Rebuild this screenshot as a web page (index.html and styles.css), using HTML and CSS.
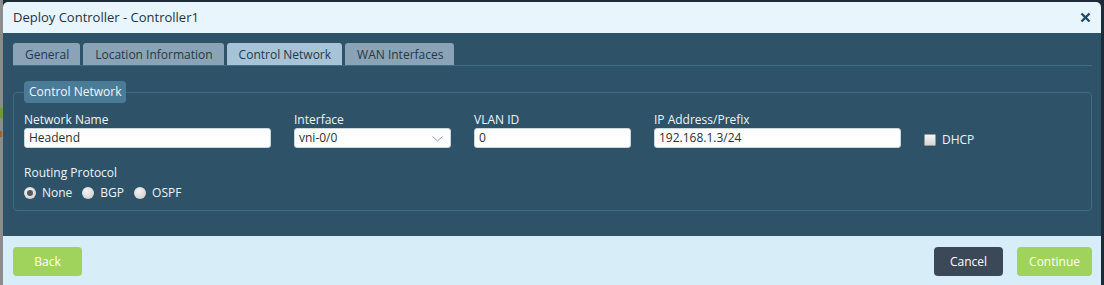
FILE: index.html
```html
<html>
<head>
  <meta charset="utf-8" />
  <title>Deploy Controller</title>
  <link rel="stylesheet" href="styles.css">
</head>
<body>

<div class="page">
  <div class="behind">
    <div class="behind-green"></div>
    <div class="behind-mark"></div>
  </div>

  <div class="dialog">
    <div class="dialog-head">
      <span class="dialog-title">Deploy Controller - Controller1</span>
      <svg class="close" width="11" height="11" viewBox="0 0 11 11">
        <path d="M1.5 1.5 L9.5 9.5 M9.5 1.5 L1.5 9.5" stroke="#1f4a68" stroke-width="2.4" />
      </svg>
    </div>

    <div class="dialog-body">
      <div class="tabs">
        <div class="tab">General</div>
        <div class="tab">Location Information</div>
        <div class="tab active">Control Network</div>
        <div class="tab">WAN Interfaces</div>
      </div>

      <fieldset class="group">
        <legend>Control Network</legend>

        <div class="row">
          <div class="field">
            <label>Network Name</label>
            <div class="box">Headend</div>
          </div>
          <div class="field narrow">
            <label>Interface</label>
            <div class="box select">vni-0/0
              <svg class="chev" width="11" height="6" viewBox="0 0 11 6">
                <path d="M0.5 0.5 L5.5 5 L10.5 0.5" fill="none" stroke="#9aa0a6" stroke-width="1" />
              </svg>
            </div>
          </div>
          <div class="field narrow">
            <label>VLAN ID</label>
            <div class="box">0</div>
          </div>
          <div class="field">
            <label>IP Address/Prefix</label>
            <div class="box">192.168.1.3/24</div>
          </div>
          <div class="check">
            <span class="checkbox"></span>DHCP
          </div>
        </div>

        <div class="routing">
          <label>Routing Protocol</label>
          <div class="radios">
            <span class="radio-item"><span class="radio on"></span>None</span>
            <span class="radio-item"><span class="radio"></span>BGP</span>
            <span class="radio-item"><span class="radio"></span>OSPF</span>
          </div>
        </div>
      </fieldset>
    </div>

    <div class="dialog-foot">
      <button class="btn green">Back</button>
      <div class="spacer"></div>
      <button class="btn dark">Cancel</button>
      <button class="btn green">Continue</button>
    </div>
  </div>
</div>

</body>
</html>
```

FILE: styles.css
```css
body {
  margin: 0;
  background: #1c2b36;
  font-family: "Open Sans", "DejaVu Sans", sans-serif;
  font-size: 12px;
}

.page {
  display: flex;
  height: 285px;
  overflow: hidden;
}

/* the page that sits behind the dialog */
.behind {
  position: relative;
  width: 3px;
  background: #8c8c8c;
  overflow: hidden;
}

.behind-green {
  position: absolute;
  left: 0;
  top: 108px;
  width: 3px;
  height: 10px;
  background: #6f9a3a;
}

.behind-mark {
  position: absolute;
  left: 0;
  top: 131px;
  width: 2px;
  height: 6px;
  background: #a5652a;
}

.dialog {
  margin-top: 2px;
  width: 1098px;
  display: flex;
  flex-direction: column;
  border-radius: 5px 5px 0 0;
  overflow: hidden;
}

.dialog-head {
  height: 31px;
  background: #e8f5fd;
  display: flex;
  align-items: center;
  padding: 0 10px;
}

.dialog-title {
  flex: 1;
  font-size: 13px;
  color: #1d3446;
  margin-top: -1px;
}

.close {
  margin-top: -1px;
}

.dialog-body {
  height: 203px;
  background: #2e5268;
  padding: 10px 9px 0 10px;
  box-sizing: border-box;
}

.tabs {
  display: flex;
  gap: 3px;
  border-bottom: 1px solid #3f6f88;
  height: 22px;
}

.tab {
  background: #8ba3b6;
  color: #23394a;
  border-radius: 3px 3px 0 0;
  padding: 1px 11px 0 12px;
  line-height: 21px;
  height: 22px;
  box-sizing: border-box;
}

.tab.active {
  background: #a6c3d8;
}

.group {
  margin: 15px 0 0 0;
  border: 1px solid #3d6d86;
  border-radius: 4px;
  padding: 9px 10px 0 10px;
  height: 130px;
  box-sizing: border-box;
}

.group legend {
  background: #4a7c98;
  color: #f2f7fa;
  border-radius: 4px;
  padding: 0 5px;
  line-height: 22px;
  height: 22px;
}

.row {
  display: flex;
  align-items: flex-start;
}

.field {
  width: 270px;
  display: flex;
  flex-direction: column;
}

.field.narrow {
  width: 180px;
}

label {
  color: #eef4f8;
  line-height: 16px;
}

.box {
  width: calc(100% - 23px);
  height: 20px;
  box-sizing: border-box;
  background: #ffffff;
  border: 1px solid #c9d6de;
  border-radius: 3px;
  color: #2a2f33;
  padding: 0 4px;
  line-height: 18px;
  position: relative;
}

.select .chev {
  position: absolute;
  right: 7px;
  top: 7px;
}

.check {
  display: flex;
  align-items: center;
  color: #eef4f8;
  margin-top: 19px;
  gap: 6px;
}

.checkbox {
  width: 10px;
  height: 10px;
  background: linear-gradient(#f4f4f4, #d6d6d6);
  border: 1px solid #9a9a9a;
  border-radius: 1px;
}

.routing {
  margin-top: 17px;
  display: flex;
  flex-direction: column;
}

.radios {
  display: flex;
  gap: 10px;
  margin-top: 3px;
}

.radio-item {
  display: flex;
  align-items: center;
  gap: 6px;
  color: #eef4f8;
}

.radio {
  width: 12px;
  height: 12px;
  border-radius: 50%;
  background: radial-gradient(circle at 40% 35%, #f4f4f4, #c8c8c8);
  position: relative;
}

.radio.on::after {
  content: "";
  position: absolute;
  left: 3px;
  top: 3px;
  width: 6px;
  height: 6px;
  border-radius: 50%;
  background: #555a5e;
}

.dialog-foot {
  flex: 1;
  background: #d7edf8;
  display: flex;
  align-items: flex-start;
  padding: 11px 9px 0 10px;
  gap: 14px;
}

.spacer {
  flex: 1;
}

.btn {
  border: none;
  height: 29px;
  min-width: 69px;
  border-radius: 4px;
  font-family: "Open Sans", "DejaVu Sans", sans-serif;
  font-size: 12px;
  color: #ffffff;
  padding: 0 12px;
}

.btn.green {
  background: #9fd35c;
}

.btn.dark {
  background: #3b4858;
}
```
